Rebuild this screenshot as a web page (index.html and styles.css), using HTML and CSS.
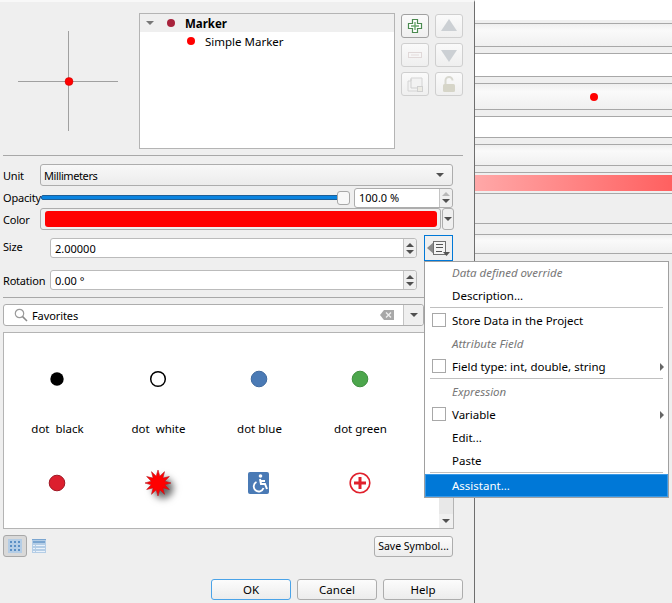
FILE: index.html
```html
<!DOCTYPE html>
<html lang="en">
<head>
<meta charset="UTF-8">
<title>Symbol Settings</title>
<link rel="stylesheet" href="styles.css">
</head>
<body>
<div class="app">
  <div class="dialog">
    <div class="symbol-row">
      <svg class="preview" width="139" height="136" viewBox="0 0 139 136">
        <path d="M18 68.5H118M68.5 18V118" stroke="#a0a0a0" stroke-width="1" fill="none"/>
        <circle cx="69" cy="68.5" r="4" fill="#f00" stroke="#c80000" stroke-width="0.5"/>
      </svg>
      <div class="tree">
        <div class="tree-row tree-root">
          <span class="tri-down"></span>
          <span class="dot dot-root"></span>
          <b>Marker</b>
        </div>
        <div class="tree-row tree-child">
          <span class="dot dot-red"></span>
          <span>Simple Marker</span>
        </div>
      </div>
      <div class="tools">
        <button class="tool tool-on"><svg width="16" height="16" viewBox="0 0 16 16"><path d="M5.5 1.5h5v4h4v5h-4v4h-5v-4h-4v-5h4z" fill="#fff" stroke="#4a8a4f" stroke-width="1.2"/><path d="M8 4v8M4 8h8" stroke="#6ca86f" stroke-width="1.4"/></svg></button>
        <button class="tool"><svg width="16" height="16" viewBox="0 0 16 16"><path d="M8 1L16 13H0z" fill="#ccd0d4"/></svg></button>
        <button class="tool"><svg width="16" height="16" viewBox="0 0 16 16"><rect x="1.5" y="5.5" width="13" height="5" fill="#f6f6f6" stroke="#e0d8d8"/><path d="M4 8h8" stroke="#e4dcdc"/></svg></button>
        <button class="tool"><svg width="16" height="16" viewBox="0 0 16 16"><path d="M0 3H16L8 15z" fill="#ccd0d4"/></svg></button>
        <button class="tool"><svg width="16" height="16" viewBox="0 0 16 16"><path d="M1 5h3V2h11v11h-3v2H1z" fill="#f2f2f2" stroke="#d4d4d4"/><path d="M4 3v9h8" fill="none" stroke="#cfcfcf"/><rect x="10.5" y="10.5" width="5" height="5" fill="#ecebe4" stroke="#d0d0d0"/></svg></button>
        <button class="tool"><svg width="16" height="17" viewBox="0 0 16 17"><path d="M4.5 8V4.5a3.5 3.5 0 0 1 7 0" fill="none" stroke="#d8d8d0" stroke-width="2"/><rect x="2" y="8" width="12" height="8" rx="1.5" fill="#d6d5c8"/></svg></button>
      </div>
    </div>

    <div class="sep sep-first"></div>

    <div class="row row-unit">
      <label class="lbl">Unit</label>
      <div class="ctl combo">
        <span class="combo-text">Millimeters</span>
        <span class="tri-down tri-dark"></span>
      </div>
    </div>

    <div class="row row-opacity">
      <label class="lbl">Opacity</label>
      <div class="slider"><span class="groove"></span><span class="handle"></span></div>
      <div class="ctl spin spin-opacity">
        <span class="spin-text">100.0 %</span>
        <span class="spin-btns"><i class="up up-off"></i><i class="down"></i></span>
      </div>
    </div>

    <div class="row row-color">
      <label class="lbl">Color</label>
      <div class="ctl color-btn"><span class="swatch"></span></div>
      <div class="ctl color-drop"><span class="tri-down tri-dark"></span></div>
    </div>

    <div class="row row-size">
      <label class="lbl lbl-size">Size</label>
      <div class="ctl spin spin-wide">
        <span class="spin-text">2.00000</span>
        <span class="spin-btns"><i class="up"></i><i class="down"></i></span>
      </div>
      <button class="dd-btn">
        <svg width="27" height="22" viewBox="0 0 27 22">
          <path d="M2 11L10 4V18z" fill="#8a8a8a"/>
          <rect x="8.5" y="4.5" width="12" height="13" fill="#f4f4f4" stroke="#707070"/>
          <path d="M11 7.5h7M11 10.5h7M11 14.5h6" stroke="#555"/>
          <path d="M18 15h7l-3.5 4z" fill="#555"/>
        </svg>
      </button>
    </div>

    <div class="row row-rotation">
      <label class="lbl">Rotation</label>
      <div class="ctl spin spin-wide">
        <span class="spin-text">0.00 °</span>
        <span class="spin-btns"><i class="up"></i><i class="down"></i></span>
      </div>
    </div>

    <div class="sep sep-second"></div>

    <div class="ctl search">
      <svg class="search-icon" width="14" height="14" viewBox="0 0 14 14"><circle cx="5.5" cy="5.5" r="4.2" fill="none" stroke="#9a9a9a" stroke-width="1.2"/><path d="M8.6 8.6L13 13" stroke="#8a8a8a" stroke-width="1.5"/></svg>
      <span class="search-text">Favorites</span>
      <svg class="search-clear" width="14" height="10" viewBox="0 0 14 10"><path d="M0 5L4 0H14V10H4z" fill="#a8a8a8"/><path d="M6 2.5l5 5M11 2.5l-5 5" stroke="#eee" stroke-width="1.4"/></svg>
      <span class="search-drop"><span class="tri-down tri-dark"></span></span>
    </div>

    <div class="list">
      <div class="grid">
        <div class="cell">
          <svg class="sym" width="40" height="24" viewBox="1 0 40 24"><circle cx="20" cy="12" r="6.7" fill="#000"/></svg>
          <span class="sym-name">dot  black</span>
        </div>
        <div class="cell">
          <svg class="sym" width="40" height="24" viewBox="1 0 40 24"><circle cx="20" cy="12" r="7.3" fill="#fff" stroke="#000" stroke-width="1.5"/></svg>
          <span class="sym-name">dot  white</span>
        </div>
        <div class="cell">
          <svg class="sym" width="40" height="24" viewBox="1 0 40 24"><circle cx="20" cy="12" r="7.8" fill="#4a7ab5" stroke="#3f6a9f"/></svg>
          <span class="sym-name">dot blue</span>
        </div>
        <div class="cell">
          <svg class="sym" width="40" height="24" viewBox="1 0 40 24"><circle cx="20" cy="12" r="7.8" fill="#4ca64c" stroke="#3f8f3f"/></svg>
          <span class="sym-name">dot green</span>
        </div>
        <div class="cell">
          <svg class="sym" width="40" height="24" viewBox="1 0 40 24"><circle cx="20" cy="12" r="7.8" fill="#dc1f2e" stroke="#a01825"/></svg>
        </div>
        <div class="cell">
          <svg class="sym star" width="40" height="40" viewBox="1 0 40 40"><polygon points="33,20 26.8,21.8 31.3,26.5 24.9,24.9 26.5,31.3 21.8,26.8 20,33 18.2,26.8 13.5,31.3 15.1,24.9 8.7,26.5 13.2,21.8 7,20 13.2,18.2 8.7,13.5 15.1,15.1 13.5,8.7 18.2,13.2 20,7 21.8,13.2 26.5,8.7 24.9,15.1 31.3,13.5 26.8,18.2" fill="#f00" stroke="#b8141c" stroke-width="0.6"/></svg>
        </div>
        <div class="cell">
          <svg class="sym" width="40" height="24" viewBox="1 0 40 24">
            <rect x="9" y="1" width="21" height="22" rx="2" fill="#4a7ab5"/>
            <circle cx="21.5" cy="5" r="1.8" fill="#fff"/>
            <path d="M21 8l1 5h4l2 5M22 10h4" fill="none" stroke="#fff" stroke-width="2"/>
            <path d="M17.5 11a5 5 0 1 0 7 6" fill="none" stroke="#fff" stroke-width="1.8"/>
          </svg>
        </div>
        <div class="cell">
          <svg class="sym" width="40" height="24" viewBox="1 0 40 24">
            <circle cx="20" cy="12" r="9.8" fill="#fff" stroke="#e0202c" stroke-width="1.6"/>
            <path d="M14 12h12M20 6v12" stroke="#e0202c" stroke-width="3"/>
          </svg>
        </div>
      </div>
      <div class="scrollbar">
        <span class="scroll-track"></span>
        <span class="scroll-btn"><span class="tri-down tri-dark"></span></span>
      </div>
    </div>

    <div class="row row-view">
      <button class="view-btn view-on">
        <svg width="14" height="14" viewBox="0 0 14 14"><rect width="14" height="14" fill="#b4cde6"/><path d="M2 2h2v2H2zM6 2h2v2H6zM10 2h2v2h-2zM2 6h2v2H2zM6 6h2v2H6zM10 6h2v2h-2zM2 10h2v2H2zM6 10h2v2H6zM10 10h2v2h-2z" fill="#5b8fc4"/></svg>
      </button>
      <button class="view-btn">
        <svg width="14" height="14" viewBox="0 0 14 14"><rect width="14" height="14" fill="#b4cde6"/><path d="M0 .5h14" stroke="#7aa5d0"/><path d="M1 3h12" stroke="#7aa5d0" stroke-width="2"/><path d="M4 6.5h9M4 9.5h9M4 12.5h9M1 6.5h2M1 9.5h2M1 12.5h2" stroke="#eaf2fa"/></svg>
      </button>
      <button class="btn btn-save">Save Symbol...</button>
    </div>

    <div class="footer">
      <button class="btn btn-ok">OK</button>
      <button class="btn">Cancel</button>
      <button class="btn">Help</button>
    </div>
  </div>

  <div class="layers">
    <div class="stripe st-white st-top"></div>
    <div class="stripe st-grad st-24"></div>
    <div class="stripe st-white st-23"></div>
    <div class="stripe st-grad st-26"><span class="dot dot-red"></span></div>
    <div class="stripe st-white st-21"></div>
    <div class="stripe st-grad st-21b"></div>
    <div class="stripe st-ramp"><span class="ramp"></span></div>
    <div class="stripe st-empty"></div>
    <div class="stripe st-grad st-19"></div>
  </div>

  <div class="menu">
    <div class="menu-item menu-title">Data defined override</div>
    <div class="menu-item">Description...</div>
    <div class="menu-sep"></div>
    <div class="menu-item"><span class="check"></span>Store Data in the Project</div>
    <div class="menu-item menu-title">Attribute Field</div>
    <div class="menu-item"><span class="check"></span>Field type: int, double, string<span class="tri-right"></span></div>
    <div class="menu-sep"></div>
    <div class="menu-item menu-title">Expression</div>
    <div class="menu-item"><span class="check"></span>Variable<span class="tri-right"></span></div>
    <div class="menu-item">Edit...</div>
    <div class="menu-item">Paste</div>
    <div class="menu-sep"></div>
    <div class="menu-item menu-active">Assistant...</div>
  </div>
</div>
</body>
</html>
```

FILE: styles.css
```css
* {
    box-sizing: border-box;
}

html, body {
    margin: 0;
    padding: 0;
}

body {
    font-family: "Noto Sans", "Open Sans", sans-serif;
    font-size: 11.5px;
    color: #000;
    overflow: hidden;
}

button {
    font: inherit;
    color: inherit;
}

.app {
    position: relative;
    display: flex;
    width: 672px;
    height: 603px;
    background-color: #efefef;
    overflow: hidden;
}

/* left dialog */
.dialog {
    flex: none;
    width: 475px;
    height: 603px;
    border-top: 2px solid #f8f8f8;
    border-right: 1px solid #6e6e6e;
    background-color: #efefef;
}

.symbol-row {
    display: flex;
    height: 136px;
    margin-top: 11px;
}

.preview {
    flex: none;
}

.tree {
    flex: none;
    width: 256px;
    border: 1px solid #b4b4b4;
    background-color: #fff;
}

.tree-row {
    display: flex;
    align-items: center;
    height: 18px;
}

.tree-root {
    padding-left: 6px;
    background-color: #efefef;
}

.tree-root b {
    margin-left: 10px;
}

.tree-child {
    padding-left: 47px;
}

.tree-child span:last-child {
    margin-left: 10px;
}

.dot {
    display: inline-block;
    width: 8px;
    height: 8px;
    border-radius: 50%;
}

.dot-root {
    margin-left: 13px;
    background-color: #a8233c;
}

.dot-red {
    background-color: #f00;
}

.tri-down {
    display: inline-block;
    width: 0;
    height: 0;
    border-left: 4px solid transparent;
    border-right: 4px solid transparent;
    border-top: 4px solid #777;
}

.tri-dark {
    border-top-color: #505050;
}

.tri-right {
    margin-left: auto;
    margin-right: 4px;
    width: 0;
    height: 0;
    border-top: 4px solid transparent;
    border-bottom: 4px solid transparent;
    border-left: 4px solid #666;
}

.tools {
    display: grid;
    grid-template-columns: 28px 28px;
    grid-auto-rows: 24px;
    gap: 5px 6px;
    margin-left: 6px;
    margin-top: 1px;
}

.tool {
    display: flex;
    align-items: center;
    justify-content: center;
    padding: 0;
    border: 1px solid #cfcfcf;
    border-radius: 3px;
    background: linear-gradient(#fafafa, #efefef);
}

.tool-on {
    border-color: #a0a0a0;
}

.sep {
    height: 1px;
    margin-left: 3px;
    width: 460px;
    background-color: #a8a8a8;
}

.sep-first {
    margin-top: 6px;
}

.sep-second {
    margin-top: 7px;
}

/* form rows */
.row {
    display: flex;
    align-items: center;
    padding-left: 3px;
}

.lbl {
    flex: none;
    width: 37px;
    font-size: 11px;
    letter-spacing: -0.2px;
}

.ctl {
    border: 1px solid #adadad;
    border-radius: 3px;
    background-color: #fff;
}

.row-unit {
    height: 22px;
    margin-top: 8px;
    padding-right: 21px;
}

.combo {
    flex: 1;
    display: flex;
    align-items: center;
    justify-content: space-between;
    height: 22px;
    padding: 0 8px 0 3px;
    background: linear-gradient(#f8f8f8, #ececec);
}

.combo-text {
    font-size: 11px;
    letter-spacing: -0.4px;
}

.row-opacity {
    height: 21px;
    margin-top: 1px;
    padding-right: 21px;
}

.slider {
    position: relative;
    flex: none;
    width: 310px;
    height: 14px;
    margin-right: 4px;
}

.groove {
    display: block;
    height: 5px;
    margin-top: 4px;
    margin-left: 1px;
    margin-right: 2px;
    border: 1px solid #1d5f96;
    border-radius: 2px;
    background-color: #0a84e0;
}

.handle {
    position: absolute;
    right: 0;
    top: 0;
    width: 13px;
    height: 14px;
    border: 1px solid #a8a8a8;
    border-radius: 3px;
    background-color: #f8f8f8;
}

.spin {
    display: flex;
    align-items: center;
    height: 20px;
}

.spin-opacity {
    flex: 1;
    background: linear-gradient(to right, #fff 86px, #efefef 86px);
}

.spin-wide {
    flex: 1;
}

.spin-text {
    flex: 1;
    padding-left: 4px;
    font-size: 11px;
}

.spin-btns {
    display: flex;
    flex: none;
    flex-direction: column;
    align-items: center;
    justify-content: center;
    gap: 3px;
    width: 13px;
    height: 100%;
    border-left: 1px solid #c4c4c4;
    border-radius: 0 3px 3px 0;
    background-color: #efefef;
}

.up, .down {
    width: 0;
    height: 0;
    border-left: 4px solid transparent;
    border-right: 4px solid transparent;
}

.up {
    border-bottom: 4px solid #505050;
}

.up-off {
    border-bottom-color: #b8b8b8;
}

.down {
    border-top: 4px solid #505050;
}

.row-color {
    height: 22px;
    padding-right: 20px;
}

.color-btn {
    flex: 1;
    height: 22px;
    padding: 2px 3px 2px 4px;
    background-color: #efefef;
}

.swatch {
    display: block;
    height: 16px;
    border-radius: 3px;
    background-color: #f00;
}

.color-drop {
    display: flex;
    flex: none;
    align-items: center;
    justify-content: center;
    width: 12px;
    height: 22px;
    margin-left: 1px;
    background-color: #efefef;
}

.row-size {
    height: 26px;
    margin-top: 5px;
    padding-right: 21px;
}

.lbl-size {
    position: relative;
    top: -2px;
}

.row-size .lbl, .row-rotation .lbl {
    width: 47px;
}

.row-size .spin, .row-rotation .spin {
    border-color: #bbb;
}

.dd-btn {
    display: flex;
    flex: none;
    align-items: center;
    justify-content: center;
    width: 29px;
    height: 26px;
    margin-left: 7px;
    padding: 0;
    border: 1px solid #0078d7;
    background-color: #efefef;
}

.row-rotation {
    height: 20px;
    margin-top: 9px;
    padding-right: 57px;
}

.search {
    display: flex;
    align-items: center;
    width: 421px;
    height: 22px;
    margin-top: 6px;
    margin-left: 3px;
    padding-left: 10px;
}

.search-text {
    flex: 1;
    margin-left: 4px;
    font-size: 11px;
    letter-spacing: -0.1px;
}

.search-clear {
    margin-right: 9px;
}

.search-drop {
    display: flex;
    align-items: center;
    justify-content: center;
    width: 20px;
    height: 100%;
    border-left: 1px solid #c4c4c4;
    border-radius: 0 3px 3px 0;
    background-color: #efefef;
}

/* symbol list */
.list {
    display: flex;
    width: 451px;
    height: 197px;
    margin-top: 6px;
    margin-left: 3px;
    border: 1px solid #b4b4b4;
    background-color: #fff;
}

.grid {
    flex: 1;
    display: grid;
    grid-template-columns: repeat(4, 101px);
    grid-auto-rows: 104px;
    padding-top: 34px;
    padding-left: 3px;
    overflow: hidden;
}

.cell {
    display: flex;
    flex-direction: column;
    align-items: center;
}

.sym {
    flex: none;
}

.star {
    margin-top: -8px;
    filter: drop-shadow(5px 5px 3px rgba(0, 0, 0, 0.6));
}

.sym-name {
    margin-top: 30px;
    line-height: 16px;
    white-space: pre;
}

.scrollbar {
    display: flex;
    flex: none;
    flex-direction: column;
    justify-content: flex-end;
    width: 14px;
    background-color: #fff;
}

.scroll-track {
    height: 18px;
    background-color: #e8e8e8;
}

.scroll-btn {
    display: flex;
    align-items: center;
    justify-content: center;
    height: 14px;
    background-color: #f0f0f0;
}

.row-view {
    height: 22px;
    margin-top: 6px;
    padding-right: 21px;
}

.view-btn {
    display: flex;
    align-items: center;
    justify-content: center;
    width: 24px;
    height: 22px;
    padding: 0;
    border: 1px solid transparent;
    border-radius: 3px;
    background: none;
}

.view-on {
    border-color: #a8a8a8;
    background-color: #d9d9d9;
}

.btn {
    width: 80px;
    height: 21px;
    padding: 0;
    border: 1px solid #adadad;
    border-radius: 3px;
    background: linear-gradient(#fcfcfc, #ececec);
}

.btn-save {
    width: 79px;
    margin-left: auto;
    font-size: 10.5px;
}

.footer {
    display: flex;
    justify-content: flex-end;
    gap: 6px;
    margin-top: 22px;
    padding-right: 11px;
}

.btn-ok {
    border-color: #4aa3e8;
}

/* right side layer rows */
.layers {
    flex: 1;
}

.stripe {
    border-bottom: 1px solid #a8a8a8;
}

.st-white {
    background-color: #fff;
}

.st-grad {
    background: linear-gradient(#efefef, #fafafa 30%, #f0f0f0);
    border-top: 1px solid #a8a8a8;
}

.st-top {
    height: 20px;
    border-bottom: none;
}

.st-24 {
    height: 24px;
    margin-top: 3px;
}

.st-23 {
    height: 24px;
    margin-top: 6px;
    border-top: 1px solid #a8a8a8;
}

.st-26 {
    display: flex;
    align-items: center;
    justify-content: center;
    height: 27px;
    margin-top: 6px;
    padding-left: 40px;
}

.st-21 {
    height: 22px;
    margin-top: 6px;
    border-top: 1px solid #a8a8a8;
}

.st-21b {
    height: 22px;
    margin-top: 6px;
}

.st-ramp {
    height: 22px;
    margin-top: 6px;
    border-top: 1px solid #a8a8a8;
    padding-top: 2px;
}

.ramp {
    display: block;
    height: 16px;
    background: linear-gradient(to right, #ffa8a8, #ff6060);
}

.st-empty {
    height: 30px;
    margin-top: 0;
}

.st-19 {
    height: 20px;
    margin-top: 10px;
}

/* popup menu */
.menu {
    position: absolute;
    left: 424px;
    top: 261px;
    width: 245px;
    height: 237px;
    border: 1px solid #a0a0a0;
    background-color: #fff;
}

.menu-item {
    display: flex;
    align-items: center;
    height: 23px;
    padding-left: 27px;
    padding-bottom: 2px;
    position: relative;
}

.menu-title {
    color: #777;
    font-style: italic;
}

.check {
    position: absolute;
    left: 7px;
    top: 3px;
    width: 14px;
    height: 14px;
    border: 1px solid #a8a8a8;
}

.menu-sep {
    height: 1px;
    margin: -1px 5px 2px;
    background-color: #c0c0c0;
}

.menu-active {
    margin-top: -1px;
    border: 1px solid #3a9ae8;
    background-color: #0078d7;
    color: #fff;
    padding-left: 26px;
    padding-bottom: 0;
}
```
